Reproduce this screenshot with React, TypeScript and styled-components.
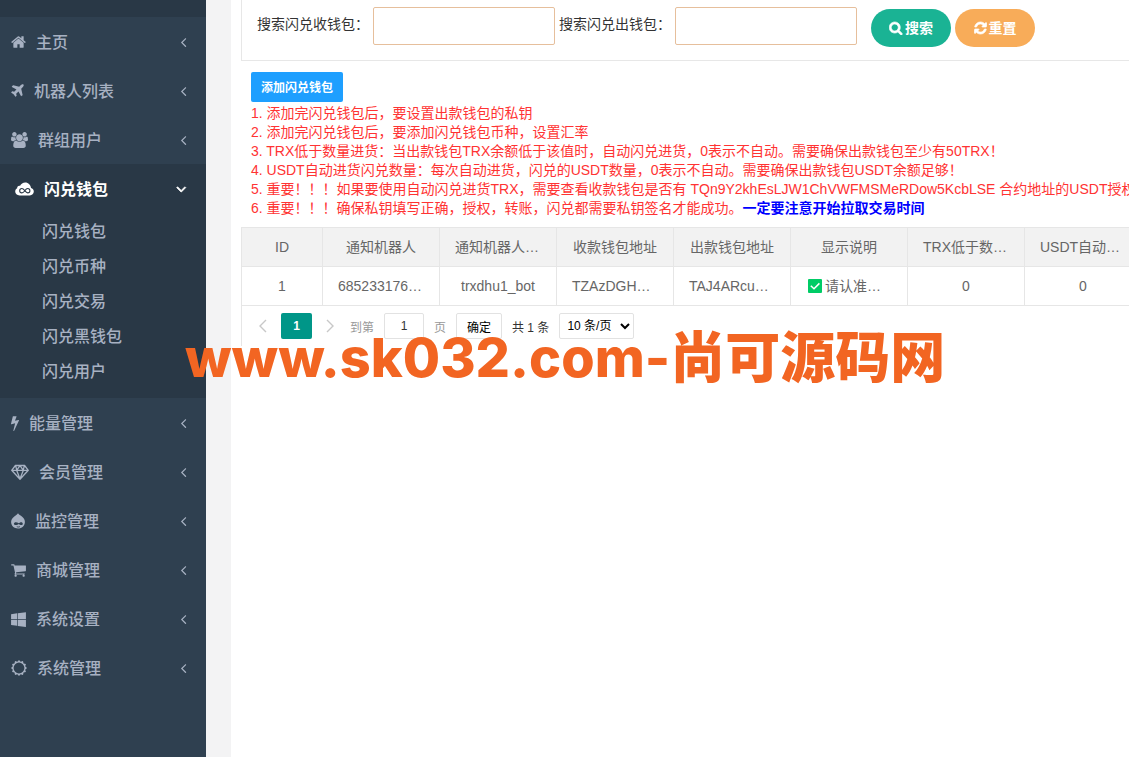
import React from "react";
import styled, { createGlobalStyle, css } from "styled-components";

const GlobalStyle = createGlobalStyle`
  *, *::before, *::after { box-sizing: border-box; }
  html, body { margin: 0; padding: 0; background: #fff; }
  body {
    font-family: "Liberation Sans", "Noto Sans CJK SC", sans-serif;
    font-size: 14px;
    color: #333;
    overflow: hidden;
  }
  button, input, select { font-family: inherit; margin: 0; }
`;

const Page = styled.div`
  position: relative;
  display: flex;
  min-height: 100vh;
  background: #f3f3f4;
`;

const Sidebar = styled.nav`
  flex: none;
  width: 206px;
  background: #2f4050;
`;

const SidebarTop = styled.div`
  height: 17px;
  background: #293846;
`;

const MenuList = styled.ul`
  margin: 0;
  padding: 0;
  list-style: none;
`;

const MenuEntry = styled.li<{ $active?: boolean }>`
  ${(p) =>
    p.$active &&
    css`
      padding-bottom: 10px;
      background: #293846;
      border-left: 4px solid #293846;
    `}
`;

const MenuLink = styled.a<{ $active?: boolean }>`
  display: flex;
  align-items: center;
  gap: 10px;
  height: 49px;
  padding: 0 19px 0 11px;
  color: ${(p) => (p.$active ? "#fff" : "#a7b1c2")};
  font-size: 16px;
  font-weight: ${(p) => (p.$active ? 700 : 500)};
  text-decoration: none;
`;

const MenuText = styled.span`
  flex: 1;
  padding-bottom: 2px;
`;

const SubList = styled.ul`
  margin: 0;
  padding: 0;
  list-style: none;
`;

const SubLink = styled.a`
  display: flex;
  align-items: center;
  height: 35px;
  padding: 0 0 2px 38px;
  color: #a7b1c2;
  font-size: 16px;
  font-weight: 500;
  text-decoration: none;
`;

const Glyph = styled.svg`
  flex: none;
  display: block;
  fill: currentColor;
`;

const Content = styled.main`
  flex: 1;
  min-width: 0;
  margin-left: 25px;
  padding-left: 10px;
  background: #fff;
  overflow: hidden;
`;

const SearchForm = styled.form`
  display: flex;
  align-items: flex-start;
  gap: 4px;
  padding: 7px 15px 13px;
  border: 1px solid #e7e7e7;
  border-width: 0 0 1px 1px;
`;

const SearchLabel = styled.label`
  display: flex;
  gap: 4px;
  line-height: 35px;
  white-space: nowrap;
`;

const SearchInput = styled.input`
  width: 182px;
  height: 38px;
  border: 1px solid #e6bf9c;
  border-radius: 2px;
  background: #fff;
  padding: 0 10px;
  outline: none;
`;

const Actions = styled.div`
  display: flex;
  gap: 4px;
  padding: 2px 0 0 10px;
`;

const PillButton = styled.button<{ $tone: string }>`
  display: flex;
  align-items: center;
  justify-content: center;
  gap: 2px;
  width: 80px;
  height: 38px;
  border: 0;
  border-radius: 19px;
  background: ${(p) => p.$tone};
  color: #fff;
  font-size: 14px;
  font-weight: 700;
  line-height: 20px;
  padding: 0;
`;

const Toolbar = styled.div`
  padding: 11px 0 9px 10px;
`;

const AddButton = styled.button`
  display: block;
  height: 30px;
  padding: 0 10px 2px;
  border: 0;
  border-radius: 2px;
  background: #1e9fff;
  color: #fff;
  font-size: 12px;
  font-weight: 700;
  margin-bottom: 2px;
`;

const Hint = styled.p`
  margin: 0;
  color: #f33;
  line-height: 19px;
  white-space: nowrap;

  b { color: #00f; }
`;

const TableView = styled.section`
  border-left: 1px solid #e6e6e6;
`;

const Table = styled.table`
  width: 900px;
  table-layout: fixed;
  border-collapse: separate;
  border-spacing: 0;
  border-top: 1px solid #e6e6e6;
  color: #666;
  font-size: 14px;

  th, td {
    height: 39px;
    padding: 0 15px;
    border: 1px solid #e6e6e6;
    border-width: 0 1px 1px 0;
    font-weight: 400;
    text-align: center;
    white-space: nowrap;
    line-height: 20px;
  }

  th { background: #f2f2f2; }
`;

const Col = styled.col<{ $w: number }>`
  width: ${(p) => p.$w}px;
`;

/* A shortened value fills its cell from the left edge of the padding box. */
const Clipped = styled.span`
  display: block;
  text-align: left;
`;

const CheckedNote = styled.span`
  display: flex;
  align-items: center;
  gap: 3px;
  padding-left: 2px;
`;

const Pager = styled.div`
  display: flex;
  align-items: center;
  gap: 10px;
  height: 40px;
  padding-left: 13px;
  font-size: 12px;
  color: #333;
`;

const PageArrow = styled.button`
  display: flex;
  align-items: center;
  justify-content: center;
  width: 16px;
  height: 26px;
  border: 0;
  padding: 0;
  background: none;
  color: #c8c8c8;
`;

const PageCurrent = styled.button`
  width: 31px;
  height: 26px;
  border: 0;
  border-radius: 2px;
  background: #009688;
  color: #fff;
  font-size: 12px;
  font-weight: 700;
`;

const Jump = styled.label`
  display: flex;
  align-items: center;
  gap: 10px;
  padding-left: 2px;
  color: #999;
`;

const JumpInput = styled.input`
  width: 40px;
  height: 26px;
  border: 1px solid #e2e2e2;
  border-radius: 2px;
  color: #333;
  font-size: 12px;
  text-align: center;
  padding: 0;
`;

const JumpButton = styled.button`
  width: 46px;
  height: 26px;
  border: 1px solid #e2e2e2;
  border-radius: 2px;
  background: #fff;
  color: #000;
  font-size: 12px;
  padding: 0;
`;

const SizeSelect = styled.select`
  width: 75px;
  height: 26px;
  border: 1px solid #e2e2e2;
  border-radius: 2px;
  background: #fff;
  color: #000;
  font-size: 12px;
  padding: 0 0 0 3px;
`;

const Watermark = styled.div`
  position: absolute;
  left: 185px;
  top: 325px;
  display: flex;
  align-items: baseline;
  color: #f26522;
  font-family: Inter, "Noto Sans CJK SC", sans-serif;
  font-size: 54px;
  font-weight: 800;
  line-height: 64px;
  white-space: nowrap;
  pointer-events: none;
`;

const WatermarkName = styled.span`
  font-size: 55px;
`;

type IconDef = { box: string; w: number; d: string };

const paths: Record<string, IconDef> = {
  home: { box: "64 0 1664 1792", w: 15, d: "M1472 992v480q0 26-19 45t-45 19h-384v-384h-256v384h-384q-26 0-45-19t-19-45v-480q0-1 .5-3t.5-3l575-474 575 474q1 2 1 6zm223-69l-62 74q-8 9-21 11h-3q-13 0-21-7l-692-577-692 577q-12 8-24 7-13-2-21-11l-62-74q-8-10-7-23.5t11-21.5l719-599q32-26 76-26t76 26l244 204v-195q0-14 9-23t23-9h192q14 0 23 9t9 23v408l219 182q10 8 11 21.5t-7 23.5z" },
  plane: { box: "192 0 1408 1792", w: 13, d: "M1568 160q44 52 12 148t-108 172l-161 161 160 696q5 19-12 33l-128 96q-7 6-19 6-4 0-7-1-15-3-21-16l-279-508-259 259 53 194q5 17-8 31l-96 96q-9 9-23 9h-2q-15-2-24-13l-189-252-252-189q-11-7-13-23-1-13 9-25l96-97q9-9 23-9 6 0 8 1l194 53 259-259-508-279q-14-8-17-24-2-16 9-27l128-128q14-13 30-8l665 159 160-160q76-76 172-108t148 12z" },
  users: { box: "-64 0 1920 1792", w: 17, d: "M529 896q-162 5-265 128h-134q-82 0-138-40.5t-56-118.5q0-353 124-353 6 0 43.5 21t97.5 42.5 119 21.5q67 0 133-23-5 37-5 66 0 139 81 256zm1071 637q0 120-73 189.5t-194 69.5h-874q-121 0-194-69.5t-73-189.5q0-53 3.5-103.5t14-109 26.5-108.5 43-97.5 62-81 85.5-53.5 111.5-20q10 0 43 21.5t73 48 107 48 135 21.5 135-21.5 107-48 73-48 43-21.5q61 0 111.5 20t85.5 53.5 62 81 43 97.5 26.5 108.5 14 109 3.5 103.5zm-1024-1277q0 106-75 181t-181 75-181-75-75-181 75-181 181-75 181 75 75 181zm704 384q0 159-112.5 271.5t-271.5 112.5-271.5-112.5-112.5-271.5 112.5-271.5 271.5-112.5 271.5 112.5 112.5 271.5zm576 225q0 78-56 118.5t-138 40.5h-134q-103-123-265-128 81-117 81-256 0-29-5-66 66 23 133 23 59 0 119-21.5t97.5-42.5 43.5-21q124 0 124 353zm-128-609q0 106-75 181t-181 75-181-75-75-181 75-181 181-75 181 75 75 181z" },
  bolt: { box: "448 0 896 1792", w: 8, d: "M1333 566q18 20 7 44l-540 1157q-13 25-42 25-4 0-14-2-17-5-25.5-19t-4.5-30l197-808-406 101q-4 1-12 1-18 0-31-11-18-15-13-39l201-825q4-14 16-23t28-9h328q19 0 32 12.5t13 29.5q0 8-5 18l-171 463 396-98q8-2 12-2 19 0 34 15z" },
  cart: { box: "64 0 1664 1792", w: 15, d: "M704 1536q0 52-38 90t-90 38-90-38-38-90 38-90 90-38 90 38 38 90zm896 0q0 52-38 90t-90 38-90-38-38-90 38-90 90-38 90 38 38 90zm128-1088v512q0 24-16.5 42.5t-40.5 21.5l-1044 122q13 60 13 70 0 16-24 64h920q26 0 45 19t19 45-19 45-45 19h-1024q-26 0-45-19t-19-45q0-11 8-31.5t16-36 21.5-40 15.5-29.5l-177-823h-204q-26 0-45-19t-19-45 19-45 45-19h256q16 0 28.5 6.5t19.5 15.5 13 24.5 8 26 5.5 29.5 4.5 26h1201q26 0 45 19t19 45z" },
  windows: { box: "64 0 1664 1792", w: 15, d: "M746 1006v651l-682-94v-557h682zm0-743v659h-682v-565zm982 743v786l-907-125v-661h907zm0-878v794h-907v-669z" },
  search: { box: "64 0 1728 1792", w: 14, d: "M1216 832q0-185-131.5-316.5t-316.5-131.5-316.5 131.5-131.5 316.5 131.5 316.5 316.5 131.5 316.5-131.5 131.5-316.5zm512 832q0 52-38 90t-90 38q-54 0-90-38l-343-342q-179 124-399 124-143 0-273.5-55.5t-225-150-150-225-55.5-273.5 55.5-273.5 150-225 225-150 273.5-55.5 273.5 55.5 225 150 150 225 55.5 273.5q0 220-124 399l343 343q37 37 37 90z" },
  refresh: { box: "128 0 1536 1792", w: 13, d: "M1639 1056q0 5-1 7-64 268-268 434.5t-478 166.5q-146 0-282.5-55t-243.5-157l-129 129q-19 19-45 19t-45-19-19-45v-448q0-26 19-45t45-19h448q26 0 45 19t19 45-19 45l-137 137q71 66 161 102t187 36q134 0 250-65t186-179q11-17 53-117 8-23 30-23h192q13 0 22.5 9.5t9.5 22.5zm25-800v448q0 26-19 45t-45 19h-448q-26 0-45-19t-19-45 19-45l138-138q-148-137-349-137-134 0-250 65t-186 179q-11 17-53 117-8 23-30 23h-199q-13 0-22.5-9.5t-9.5-22.5v-7q65-268 270-434.5t480-166.5q146 0 284 55.5t245 156.5l130-129q19-19 45-19t45 19 19 45z" },
  left: { box: "512 0 768 1792", w: 7, d: "M1203 544q0 13-10 23l-393 393 393 393q10 10 10 23t-10 23l-50 50q-10 10-23 10t-23-10l-466-466q-10-10-10-23t10-23l466-466q10-10 23-10t23 10l50 50q10 10 10 23z" },
  down: { box: "384 0 1088 1792", w: 11, d: "M1395 736q0 13-10 23l-466 466q-10 10-23 10t-23-10l-466-466q-10-10-10-23t10-23l50-50q10-10 23-10t23 10l393 393 393-393q10-10 23-10t23 10l50 50q10 10 10 23z" },
};

function Icon({ name, size = 16, bold }: { name: string; size?: number; bold?: boolean }) {
  const p = paths[name];
  return (
    <Glyph viewBox={p.box} width={p.w} height={size} aria-hidden="true">
      <path d={p.d} stroke="currentColor" strokeWidth={bold ? 90 : 0} />
    </Glyph>
  );
}

function GemIcon() {
  return (
    <Glyph viewBox="0 0 18 16" width={18} height={16} aria-hidden="true">
      <path
        d="M4.4 1.5h9.2L17.3 6.300 9 15.200.7 6.300zM1 6.300h16M5.600 6.300 9 14.800l3.400-8.500M4.600 1.700l1.200 4.500L9 1.700l3.200 4.500 1.200-4.500"
        fill="none"
        stroke="currentColor"
        strokeWidth="1.3"
        strokeLinejoin="round"
      />
    </Glyph>
  );
}

function CloudIcon() {
  return (
    <Glyph viewBox="0 0 19 14" width={19} height={14} aria-hidden="true">
      <path d="M4.600 13.400C2 13.400.2 11.800.2 9.600c0-1.500.8-2.700 2-3.300-.3-1.700 1.200-3 2.900-2.500C6 1.800 7.900.5 10.200.5c3.200 0 5.600 2.500 5.800 5.500 1.700.5 2.800 1.800 2.800 3.600 0 2.200-1.800 3.800-4 3.800z" />
      <path
        d="M9.800 8.700C8.700 7.300 8 6.500 6.900 6.500a2.200 2.200 0 0 0 0 4.400c1.200 0 1.900-.8 2.900-2.200s1.700-2.200 2.900-2.200a2.200 2.200 0 0 1 0 4.400c-1.100 0-1.800-.8-2.900-2.200z"
        fill="none"
        stroke="#293846"
        strokeWidth="1.1"
      />
    </Glyph>
  );
}

function DropletIcon() {
  return (
    <Glyph viewBox="0 0 14 16" width={14} height={16} aria-hidden="true">
      <path d="M7 .3c1 1.500 2.300 2.100 3.600 3 2 1.400 3.300 3.200 3.300 5.600 0 3.700-3 6.600-6.900 6.600S.1 12.700.1 9c0-2.300 1.200-4.200 3.200-5.600C4.700 2.500 6 1.800 7 .3z" />
      <path
        d="M7.800 10.300c-1-.7-1.900-1.100-2.900-1.100-1.200 0-2 .6-2 1.500s.8 1.400 1.900 1.400c1.200 0 2.100-.7 3-1.200.8.600 1.500 1.200 2.500 1.200s1.500-.5 1.500-1.300-.7-1.500-1.500-1.500c-1 0-1.700.5-2.500 1z"
        fill="#2f4050"
      />
      <path d="M5.800 13.600c1 .6 2.200.6 3.200-.1" fill="none" stroke="#2f4050" strokeWidth=".9" />
    </Glyph>
  );
}

function SunIcon() {
  const points = Array.from({ length: 24 }, (_, i) => {
    const a = (i * Math.PI) / 12 - Math.PI / 2;
    const r = i % 2 === 0 ? 8 : 6.4;
    return `${(8 + r * Math.cos(a)).toFixed(2)},${(8 + r * Math.sin(a)).toFixed(2)}`;
  });
  return (
    <Glyph viewBox="0 0 16 16" width={16} height={16} aria-hidden="true">
      <path fillRule="evenodd" d={`M${points.join("L")}ZM8 2.600a5.400 5.400 0 1 0 0 10.800a5.400 5.400 0 1 0 0-10.800Z`} />
    </Glyph>
  );
}

type Entry = { label: string; icon: React.ReactNode; children?: string[] };

const menu: Entry[] = [
  { label: "主页", icon: <Icon name="home" /> },
  { label: "机器人列表", icon: <Icon name="plane" /> },
  { label: "群组用户", icon: <Icon name="users" /> },
  {
    label: "闪兑钱包",
    icon: <CloudIcon />,
    children: ["闪兑钱包", "闪兑币种", "闪兑交易", "闪兑黑钱包", "闪兑用户"],
  },
  { label: "能量管理", icon: <Icon name="bolt" /> },
  { label: "会员管理", icon: <GemIcon /> },
  { label: "监控管理", icon: <DropletIcon /> },
  { label: "商城管理", icon: <Icon name="cart" /> },
  { label: "系统设置", icon: <Icon name="windows" /> },
  { label: "系统管理", icon: <SunIcon /> },
];

const hints = [
  "1. 添加完闪兑钱包后，要设置出款钱包的私钥",
  "2. 添加完闪兑钱包后，要添加闪兑钱包币种，设置汇率",
  "3. TRX低于数量进货：当出款钱包TRX余额低于该值时，自动闪兑进货，0表示不自动。需要确保出款钱包至少有50TRX！",
  "4. USDT自动进货闪兑数量：每次自动进货，闪兑的USDT数量，0表示不自动。需要确保出款钱包USDT余额足够！",
  "5. 重要！！！如果要使用自动闪兑进货TRX，需要查看收款钱包是否有 TQn9Y2khEsLJW1ChVWFMSMeRDow5KcbLSE 合约地址的USDT授权",
];

const columns = ["ID", "通知机器人", "通知机器人…", "收款钱包地址", "出款钱包地址", "显示说明", "TRX低于数…", "USDT自动…"];

function CellText({ text }: { text: string }) {
  return text.endsWith("…") ? <Clipped>{text}</Clipped> : <>{text}</>;
}

function Check() {
  return (
    <Glyph viewBox="0 0 14 14" width={14} height={14} role="img" aria-label="已启用">
      <rect width="14" height="14" rx="1" fill="#0c6" />
      <path d="M2.800 6.800 6 9.800l5.400-5.400" fill="none" stroke="#fff" strokeWidth="1.5" />
    </Glyph>
  );
}

export default function App() {
  return (
    <Page>
      <GlobalStyle />
      <Sidebar>
        <SidebarTop />
        <MenuList>
          {menu.map((m) => {
            const active = !!m.children;
            return (
              <MenuEntry key={m.label} $active={active}>
                <MenuLink href="#" $active={active}>
                  {m.icon}
                  <MenuText>{m.label}</MenuText>
                  <Icon name={active ? "down" : "left"} bold={active} />
                </MenuLink>
                {m.children && (
                  <SubList>
                    {m.children.map((c) => (
                      <li key={c}>
                        <SubLink href="#">{c}</SubLink>
                      </li>
                    ))}
                  </SubList>
                )}
              </MenuEntry>
            );
          })}
        </MenuList>
      </Sidebar>

      <Content>
        <SearchForm onSubmit={(e) => e.preventDefault()}>
          <SearchLabel>
            搜索闪兑收钱包：
            <SearchInput type="text" />
          </SearchLabel>
          <SearchLabel>
            搜索闪兑出钱包：
            <SearchInput type="text" />
          </SearchLabel>
          <Actions>
            <PillButton type="submit" $tone="#1ab394">
              <Icon name="search" size={14} bold />
              搜索
            </PillButton>
            <PillButton type="reset" $tone="#f8ac59">
              <Icon name="refresh" size={14} bold />
              重置
            </PillButton>
          </Actions>
        </SearchForm>

        <Toolbar>
          <AddButton type="button">添加闪兑钱包</AddButton>
          {hints.map((h) => (
            <Hint key={h}>{h}</Hint>
          ))}
          <Hint>
            6. 重要！！！确保私钥填写正确，授权，转账，闪兑都需要私钥签名才能成功。<b>一定要注意开始拉取交易时间</b>
          </Hint>
        </Toolbar>

        <TableView>
          <Table>
            <colgroup>
              {columns.map((c, i) => (
                <Col key={c} $w={i === 0 ? 81 : 117} />
              ))}
            </colgroup>
            <thead>
              <tr>
                {columns.map((c) => (
                  <th key={c} scope="col">
                    <CellText text={c} />
                  </th>
                ))}
              </tr>
            </thead>
            <tbody>
              <tr>
                <td>1</td>
                <td><CellText text="685233176…" /></td>
                <td>trxdhu1_bot</td>
                <td><CellText text="TZAzDGH…" /></td>
                <td><CellText text="TAJ4ARcu…" /></td>
                <td>
                  <CheckedNote>
                    <Check />
                    请认准…
                  </CheckedNote>
                </td>
                <td>0</td>
                <td>0</td>
              </tr>
            </tbody>
          </Table>
          <Pager>
            <PageArrow type="button" aria-label="上一页">
              <Glyph viewBox="0 0 8 14" width={8} height={14}>
                <path d="M7 1 1 7l6 6" fill="none" stroke="currentColor" strokeWidth="1.4" />
              </Glyph>
            </PageArrow>
            <PageCurrent type="button">1</PageCurrent>
            <PageArrow type="button" aria-label="下一页">
              <Glyph viewBox="0 0 8 14" width={8} height={14}>
                <path d="m1 1 6 6-6 6" fill="none" stroke="currentColor" strokeWidth="1.4" />
              </Glyph>
            </PageArrow>
            <Jump>
              到第
              <JumpInput type="text" defaultValue="1" />
              页
            </Jump>
            <JumpButton type="button">确定</JumpButton>
            <span>共 1 条</span>
            <SizeSelect aria-label="每页条数" defaultValue="10">
              <option value="10">10 条/页</option>
              <option value="20">20 条/页</option>
            </SizeSelect>
          </Pager>
        </TableView>
      </Content>

      <Watermark>
        www.sk032.com-<WatermarkName>尚可源码网</WatermarkName>
      </Watermark>
    </Page>
  );
}
